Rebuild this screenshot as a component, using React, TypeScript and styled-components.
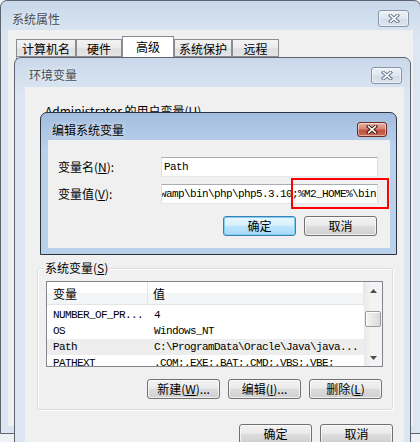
import React from "react";
import styled, { createGlobalStyle } from "styled-components";

const GlobalStyle = createGlobalStyle`
  html, body { margin: 0; padding: 0; }
  body {
    background: #eef1f5;
    font-family: "Noto Sans CJK SC", "Liberation Sans", sans-serif;
    font-size: 12px;
    color: #000;
  }
  * { box-sizing: border-box; }
`;

const Desktop = styled.div`
  position: relative;
  width: 420px;
  height: 442px;
  overflow: hidden;
  background: #eef1f5;
`;

const Window = styled.div<{ $active?: boolean }>`
  position: absolute;
  display: flex;
  flex-direction: column;
  border: 1px solid ${(p) => (p.$active ? "#2c3440" : "#5e646c")};
  border-radius: 7px 7px 0 0;
  background: ${(p) =>
    p.$active
      ? "linear-gradient(180deg, #a2bddf 0px, #b3cae7 24px, #bad1ec 36px, #bad1ec 100%)"
      : "linear-gradient(180deg, #c9d8ea 0px, #d5e1ef 24px, #dbe6f2 36px, #dbe6f2 100%)"};
`;

const SysPropsWindow = styled(Window)`
  left: 0;
  top: 0;
  width: 421px;
  height: 434px;
  padding: 0 7px 7px 7px;
`;

const EnvWindow = styled(Window)`
  left: 14px;
  top: 57px;
  width: 397px;
  height: 420px;
  padding: 0 6px 0 10px;
`;

const EditWindow = styled(Window)`
  left: 40px;
  top: 112px;
  width: 357px;
  height: 143px;
  padding: 0 6px 6px 7px;
`;

const TitleBar = styled.div<{ $h: number }>`
  height: ${(p) => p.$h}px;
  flex-shrink: 0;
  display: flex;
  justify-content: space-between;
  align-items: flex-start;
`;

const TitleText = styled.div<{ $active?: boolean; $top: number }>`
  margin: ${(p) => p.$top}px 0 0 4px;
  line-height: 16px;
  color: ${(p) => (p.$active ? "#000" : "#474c52")};
  text-shadow: 0 0 5px rgba(255, 255, 255, 0.9);
`;

const CloseBtn = styled.div<{ $active?: boolean; $mr: number }>`
  width: ${(p) => (p.$active ? 30 : 31)}px;
  height: ${(p) => (p.$active ? 15 : 17)}px;
  margin-top: 9px;
  margin-right: ${(p) => p.$mr}px;
  border: 1px solid ${(p) => (p.$active ? "#6b2c25" : "#8595aa")};
  border-radius: 3px;
  display: flex;
  align-items: center;
  justify-content: center;
  background: ${(p) =>
    p.$active
      ? "linear-gradient(180deg, #e9b2a6 0%, #d88575 45%, #c2503d 55%, #cf6a55 100%)"
      : "linear-gradient(180deg, #eef2f7 0%, #dfe6ef 50%, #d3dce8 55%, #dde5ef 100%)"};
  box-shadow: inset 0 0 0 1px rgba(255, 255, 255, 0.45);
`;

const CloseGlyph: React.FC<{ active?: boolean }> = ({ active }) => (
  <svg width="12" height="9" viewBox="0 0 12 9">
    <g strokeLinecap="square">
      <line x1="2.5" y1="1.5" x2="9.5" y2="7.5" stroke={active ? "#3b1712" : "#6c7888"} strokeWidth="3.6" />
      <line x1="9.5" y1="1.5" x2="2.5" y2="7.5" stroke={active ? "#3b1712" : "#6c7888"} strokeWidth="3.6" />
      <line x1="2.5" y1="1.5" x2="9.5" y2="7.5" stroke="#fff" strokeWidth="1.6" />
      <line x1="9.5" y1="1.5" x2="2.5" y2="7.5" stroke="#fff" strokeWidth="1.6" />
    </g>
  </svg>
);

const ClientArea = styled.div`
  flex: 1;
  background: #f0f0f0;
  display: flex;
  flex-direction: column;
  min-height: 0;
`;

/* ---------- System properties (back window) ---------- */

const SysClient = styled(ClientArea)`
  padding: 6px 8px 40px 8px;
`;

const TabStrip = styled.div`
  display: flex;
  align-items: flex-end;
  height: 21px;
  flex-shrink: 0;
`;

const Tab = styled.div<{ $w: number; $sel?: boolean }>`
  width: ${(p) => p.$w}px;
  height: ${(p) => (p.$sel ? 21 : 18)}px;
  border: 1px solid #898c95;
  border-bottom: ${(p) => (p.$sel ? "none" : "1px solid #898c95")};
  background: ${(p) =>
    p.$sel ? "#fff" : "linear-gradient(180deg, #f3f3f3 0%, #ebebeb 50%, #dedede 55%, #e6e6e6 100%)"};
  display: flex;
  align-items: center;
  justify-content: center;
  padding-top: ${(p) => (p.$sel ? 0 : 2)}px;
  line-height: 14px;
`;

const TabPanel = styled.div`
  flex: 1;
  border: 1px solid #898c95;
  border-top: none;
  background: #fff;
`;

/* ---------- Environment variables window ---------- */

const EnvClient = styled(ClientArea)`
  padding: 0 11px 0 12px;
`;

const UserLabel = styled.div`
  margin: 17px 0 0 8px;
  line-height: 14px;
  white-space: nowrap;
`;

const Mono = styled.span`
  font-family: "Liberation Mono", "DejaVu Sans Mono", monospace;
  font-size: 11px;
  letter-spacing: -0.6px;
`;

const GroupBox = styled.div`
  position: relative;
  margin-top: 150px;
  border: 1px solid #d5dfe5;
  border-radius: 3px;
  box-shadow: inset 1px 1px 0 #fff, 1px 1px 0 #fff;
  padding: 12px 9px 10px 8px;
  display: flex;
  flex-direction: column;
`;

const Legend = styled.div`
  position: absolute;
  top: -8px;
  left: 6px;
  padding: 0 1px;
  line-height: 14px;
  background: #f0f0f0;
`;

const ListBox = styled.div`
  height: 86px;
  border: 1px solid #828790;
  background: #fff;
  display: flex;
  overflow: hidden;
`;

const ListContent = styled.div`
  flex: 1;
  display: flex;
  flex-direction: column;
  overflow: hidden;
`;

const HeaderRow = styled.div`
  height: 23px;
  flex-shrink: 0;
  display: flex;
  background: linear-gradient(180deg, #ffffff 0%, #ffffff 50%, #f4f5f7 52%, #f4f5f7 100%);
  border-bottom: 1px solid #e5e5e5;
  margin-bottom: 2px;
`;

const HeaderCell = styled.div<{ $w?: number }>`
  ${(p) => (p.$w ? `width: ${p.$w}px;` : "flex: 1;")}
  padding-left: ${(p) => (p.$w ? 6 : 5)}px;
  display: flex;
  align-items: center;
  border-right: 1px solid #e3e5e8;
  padding-top: 1px;
`;

const Row = styled.div<{ $sel?: boolean }>`
  height: 16px;
  flex-shrink: 0;
  display: flex;
  align-items: center;
  background: ${(p) => (p.$sel ? "#ededed" : "transparent")};
  white-space: nowrap;
`;

const Cell = styled.div<{ $w?: number }>`
  ${(p) => (p.$w ? `width: ${p.$w}px;` : "flex: 1;")}
  padding-left: 6px;
  overflow: hidden;
  font-family: "Liberation Mono", "DejaVu Sans Mono", monospace;
  font-size: 11px;
  letter-spacing: -0.6px;
  line-height: 16px;
`;

const ScrollBar = styled.div`
  width: 18px;
  flex-shrink: 0;
  display: flex;
  flex-direction: column;
  background: linear-gradient(90deg, #e9e9e9 0%, #f3f3f3 40%, #f3f3f3 100%);
`;

const ScrollArrow = styled.div`
  height: 17px;
  flex-shrink: 0;
  display: flex;
  align-items: center;
  justify-content: center;
`;

const ScrollTrack = styled.div`
  flex: 1;
  padding: 12px 1px 0 1px;
`;

const Thumb = styled.div`
  height: 16px;
  border: 1px solid #9a9a9a;
  border-radius: 2px;
  background: linear-gradient(90deg, #f4f4f4 0%, #e8e8e8 50%, #d9d9d9 100%);
  box-shadow: inset 1px 1px 0 #fff;
`;

const ButtonRow = styled.div<{ $top: number; $right?: number }>`
  display: flex;
  justify-content: flex-end;
  gap: 8px;
  margin-top: ${(p) => p.$top}px;
  margin-right: ${(p) => p.$right ?? 0}px;
`;

const Button = styled.div<{ $default?: boolean }>`
  width: 73px;
  height: 20px;
  border: 1px solid ${(p) => (p.$default ? "#3c7fb1" : "#707070")};
  border-radius: 3px;
  display: flex;
  align-items: center;
  justify-content: center;
  line-height: 14px;
  white-space: nowrap;
  background: ${(p) =>
    p.$default
      ? "linear-gradient(180deg, #eaf6fd 0%, #d9f0fc 45%, #bee6fd 50%, #a7d9f5 100%)"
      : "linear-gradient(180deg, #f2f2f2 0%, #ebebeb 45%, #dddddd 50%, #cfcfcf 100%)"};
  box-shadow: inset 0 0 0 1px ${(p) => (p.$default ? "#7ed0f5" : "rgba(255,255,255,0.7)")};
`;

/* ---------- Edit dialog ---------- */

const EditClient = styled(ClientArea)`
  padding: 0 12px 0 10px;
`;

const FieldRow = styled.div<{ $top: number }>`
  display: flex;
  align-items: center;
  margin-top: ${(p) => p.$top}px;
`;

const FieldLabel = styled.div`
  width: 103px;
  line-height: 14px;
  white-space: nowrap;
`;

const FieldBox = styled.div`
  position: relative;
  width: 217px;
`;

const TextBox = styled.div`
  height: 20px;
  border: 1px solid #dbdfe6;
  border-top-color: #abadb3;
  border-bottom-color: #e3e9ef;
  background: #fff;
  display: flex;
  align-items: center;
  overflow: hidden;
  white-space: nowrap;
  padding: 0 1px 0 2px;
`;

const RightAligned = styled(TextBox)`
  justify-content: flex-end;
`;

const Highlight = styled.div`
  position: absolute;
  left: 130px;
  top: -6px;
  width: 98px;
  height: 31px;
  border: 2px solid #ff0000;
  pointer-events: none;
`;

const Arrow: React.FC<{ down?: boolean }> = ({ down }) => (
  <svg width="7" height="4" viewBox="0 0 7 4">
    <polygon points={down ? "0,0 7,0 3.5,4" : "0,4 7,4 3.5,0"} fill="#4d4d4d" />
  </svg>
);

const rows = [
  { name: "NUMBER_OF_PR...", value: "4" },
  { name: "OS", value: "Windows_NT" },
  { name: "Path", value: "C:\\ProgramData\\Oracle\\Java\\java...", sel: true },
  { name: "PATHEXT", value: ".COM;.EXE;.BAT;.CMD;.VBS;.VBE;" },
];

const tabs = [
  { label: "计算机名", w: 60 },
  { label: "硬件", w: 46 },
  { label: "高级", w: 52, sel: true },
  { label: "系统保护", w: 58 },
  { label: "远程", w: 47 },
];

export default function App() {
  return (
    <>
      <GlobalStyle />
      <Desktop>
        <SysPropsWindow>
          <TitleBar $h={29}>
            <TitleText $top={10}>系统属性</TitleText>
            <CloseBtn $mr={4}>
              <CloseGlyph />
            </CloseBtn>
          </TitleBar>
          <SysClient>
            <TabStrip>
              {tabs.map((t) => (
                <Tab key={t.label} $w={t.w} $sel={t.sel}>
                  {t.label}
                </Tab>
              ))}
            </TabStrip>
            <TabPanel />
          </SysClient>
        </SysPropsWindow>

        <EnvWindow>
          <TitleBar $h={29}>
            <TitleText $top={9}>环境变量</TitleText>
            <CloseBtn $mr={2}>
              <CloseGlyph />
            </CloseBtn>
          </TitleBar>
          <EnvClient>
            <UserLabel>
              Administrator 的用户变量(<u>U</u>)
            </UserLabel>
            <GroupBox>
              <Legend>
                系统变量(<u>S</u>)
              </Legend>
              <ListBox>
                <ListContent>
                  <HeaderRow>
                    <HeaderCell $w={101}>变量</HeaderCell>
                    <HeaderCell>值</HeaderCell>
                  </HeaderRow>
                  {rows.map((r) => (
                    <Row key={r.name} $sel={r.sel}>
                      <Cell $w={101}>{r.name}</Cell>
                      <Cell>{r.value}</Cell>
                    </Row>
                  ))}
                </ListContent>
                <ScrollBar>
                  <ScrollArrow>
                    <Arrow />
                  </ScrollArrow>
                  <ScrollTrack>
                    <Thumb />
                  </ScrollTrack>
                  <ScrollArrow>
                    <Arrow down />
                  </ScrollArrow>
                </ScrollBar>
              </ListBox>
              <ButtonRow $top={12} $right={1}>
                <Button>
                  新建(<u>W</u>)...
                </Button>
                <Button>
                  编辑(<u>I</u>)...
                </Button>
                <Button>
                  删除(<u>L</u>)
                </Button>
              </ButtonRow>
            </GroupBox>
            <ButtonRow $top={14}>
              <Button>确定</Button>
              <Button>取消</Button>
            </ButtonRow>
          </EnvClient>
        </EnvWindow>

        <EditWindow $active>
          <TitleBar $h={27}>
            <TitleText $active $top={9}>
              编辑系统变量
            </TitleText>
            <CloseBtn $active $mr={3}>
              <CloseGlyph active />
            </CloseBtn>
          </TitleBar>
          <EditClient>
            <FieldRow $top={17}>
              <FieldLabel>
                变量名(<u>N</u>):
              </FieldLabel>
              <FieldBox>
                <TextBox>
                  <Mono>Path</Mono>
                </TextBox>
              </FieldBox>
            </FieldRow>
            <FieldRow $top={7}>
              <FieldLabel>
                变量值(<u>V</u>):
              </FieldLabel>
              <FieldBox>
                <RightAligned>
                  <Mono>C:\wamp\bin\php\php5.3.10;%M2_HOME%\bin</Mono>
                </RightAligned>
                <Highlight />
              </FieldBox>
            </FieldRow>
            <ButtonRow $top={12} $right={1}>
              <Button $default>确定</Button>
              <Button>取消</Button>
            </ButtonRow>
          </EditClient>
        </EditWindow>
      </Desktop>
    </>
  );
}
